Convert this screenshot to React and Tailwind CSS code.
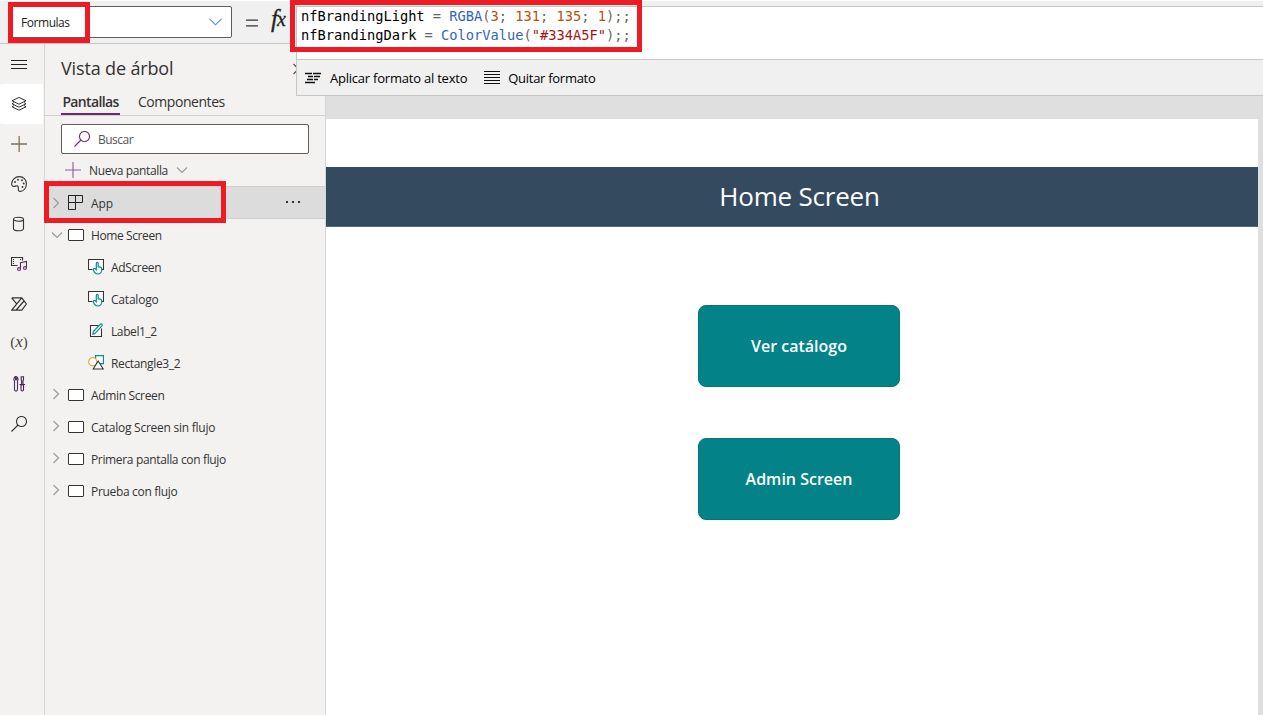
import React from "react";

const Svg = ({ w = 16, h = 16, children, className = "" }) => (
  <svg
    width={w}
    height={h}
    viewBox={`0 0 ${w} ${h}`}
    fill="none"
    stroke="#333"
    strokeWidth="1.1"
    className={`shrink-0 ${className}`}
  >
    {children}
  </svg>
);

const SearchIcon = ({ color = "#333" }) => (
  <Svg>
    <g stroke={color}>
      <circle cx="10.5" cy="5.5" r="5" />
      <path d="M7 9L.5 15.5" />
    </g>
  </Svg>
);

const MenuIcon = () => (
  <Svg>
    <path d="M0 4.5h16M0 8.5h16M0 12.5h16" stroke="#222" strokeWidth="1" />
  </Svg>
);

const LayersIcon = () => (
  <Svg>
    <path
      d="M8 1.4L15 4.8 8 8.2 1 4.8zM3 6.6L1 7.8l7 3.400 7-3.400-2-1.200M3 9.600l-2 1.200 7 3.400 7-3.400-2-1.200"
      strokeWidth="1"
    />
  </Svg>
);

const PlusRailIcon = () => (
  <Svg>
    <path d="M7.500 0v16" stroke="#e0a860" strokeWidth="1" />
    <path d="M8.500 0v16" stroke="#7b94ad" strokeWidth="1" />
    <path d="M0 8h16" stroke="#777" strokeWidth="1.600" />
  </Svg>
);

const PaletteIcon = () => (
  <Svg>
    <path d="M8.300.6C12.500.600 15.400 3.700 15.400 7.800c0 4.400-2.900 7.600-6.200 7.600-1.500 0-2-1-1.900-2.300.1-1.500.3-3-1.200-3.300-1.300-.2-2 .9-3.600.7C1 10.300.6 9.300.6 8 .6 4 4 .6 8.300.6z" />
    <g fill="#333" stroke="none">
      <circle cx="4" cy="6" r=".95" />
      <circle cx="7" cy="3.700" r=".95" />
      <circle cx="11" cy="4.200" r=".95" />
      <circle cx="12.700" cy="7.500" r=".95" />
      <circle cx="11.500" cy="11" r=".95" />
    </g>
  </Svg>
);

const DatabaseIcon = () => (
  <Svg>
    <ellipse cx="7.500" cy="3.200" rx="5" ry="2" />
    <path d="M2.500 3.200v9.600c0 1.200 2.200 2 5 2s5-.8 5-2V3.200" />
  </Svg>
);

const MediaIcon = () => (
  <Svg>
    <path d="M6.500 9.500H.5v-8h11v3" strokeWidth="1.200" />
    <path d="M2.500 3v6M9.500 3v2" strokeDasharray="1 1" strokeWidth="1" />
    <path d="M9.500 13V6.800l6-1.300v6.300" stroke="#4a3152" />
    <ellipse cx="8" cy="13" rx="1.500" ry="1.400" stroke="#6a3275" />
    <ellipse cx="14" cy="12" rx="1.500" ry="1.400" stroke="#6a3275" />
  </Svg>
);

const FlowIcon = () => (
  <Svg>
    <path
      d="M.7 1.800h10.100L15.400 8l-4.600 6.200H.7L10.500 2.200M.7 1.800L5.500 7.600M5.200 14L13 5M4.800 8.800"
      strokeLinejoin="round"
      strokeWidth="1.200"
    />
  </Svg>
);

const ToolsIcon = () => (
  <Svg>
    <g strokeWidth="1.100">
      <path
        d="M4.500.6v3h1.200V.8C7.300 1.700 7.300 4 6.500 5v8.600c0 2-3 2-3 0V5C2.500 4 2.500 1.700 4.500.6z"
        stroke="#4b3355"
      />
      <path d="M10.200.800h2.300v2.700l-.5 1.500v4h.5v4.500c0 2-2.500 2-2.500 0V9h.6V5l-.4-1.500zM8.500 8.500h5.500" stroke="#4b2355" />
    </g>
  </Svg>
);

const VariableIcon = () => (
  <span className="-mt-1 flex font-['Liberation_Serif',serif] text-[15px] leading-4 text-[#444]">
    (<i className="text-[17px]">x</i>)
  </span>
);

const Chevron = ({ down, className = "" }) => (
  <Svg w={12} h={12} className={className}>
    <path d={down ? "M1 3.500L6 8.500 11 3.500" : "M3.500 1L8.500 6 3.500 11"} stroke="#999" />
  </Svg>
);

const AppIcon = () => (
  <Svg>
    <path d="M.5.500h14v7H.5zM7.500.5v14H.5V.5" stroke="#222" strokeWidth="1" />
  </Svg>
);

const ScreenIcon = () => <span className="h-3 w-4 shrink-0 rounded-[1px] border border-[#333] bg-white" />;

const ButtonIcon = () => (
  <Svg>
    <path d="M4.500 10.500H.5V.500h15v10H14" fill="#fff" stroke="#333" />
    <path
      d="M8.300 9V4.400c0-1.300 1.900-1.300 1.900 0v3.300l2.500.6c.8.200 1.100.7 1 1.500v1.700c-.3 2.500-1.700 3.500-4 3.500-2.200 0-3.300-1.300-4.200-3.700-.5-1.300.6-2.400 1.800-1.500l1 1z"
      fill="#fff"
      stroke="#0a8d91"
      strokeWidth="1.200"
    />
  </Svg>
);

const LabelIcon = () => (
  <Svg>
    <path d="M13.500 5.500v8h-11v-11h8" fill="#fff" />
    <path d="M4.800 11.200l.7-2.900L12.200 1.300c1.200-1.200 2.800.3 1.700 1.500L7.500 10z" fill="#d9efef" stroke="#0a8d91" />
  </Svg>
);

const ShapeIcon = () => (
  <Svg>
    <path d="M7.500.700h8v8h-8z" stroke="#0a8d91" strokeWidth="1.300" fill="#fff" />
    <circle cx="4.700" cy="6.700" r="4.100" stroke="#f0a93c" strokeWidth="1.200" fill="#fff" />
    <path d="M10.200 6l5 8H5.200z" fill="#fff" />
  </Svg>
);

const RAIL = [
  MenuIcon,
  LayersIcon,
  PlusRailIcon,
  PaletteIcon,
  DatabaseIcon,
  MediaIcon,
  FlowIcon,
  VariableIcon,
  ToolsIcon,
  SearchIcon,
];

const CONTROLS = [
  ["AdScreen", ButtonIcon, "tracking-[-0.35px]"],
  ["Catalogo", ButtonIcon, "tracking-[-0.2px]"],
  ["Label1_2", LabelIcon, "tracking-[-0.4px]"],
  ["Rectangle3_2", ShapeIcon, "tracking-[-0.35px]"],
];

const SCREENS = [
  ["Admin Screen", "tracking-[-0.35px]"],
  ["Catalog Screen sin flujo", "tracking-[-0.25px]"],
  ["Primera pantalla con flujo", "tracking-[-0.35px]"],
  ["Prueba con flujo", "tracking-[-0.32px]"],
];

function Header() {
  return (
    <header className="flex h-11 shrink-0 items-start border-t border-b border-t-white border-b-[#c8c6c4] bg-[#f0f0f0]">
      <div className="mt-[5px] ml-[10px] flex h-8 w-[222px] items-center justify-between rounded-[2px] border border-[#605e5c] bg-white pr-[9px] pl-[10px]">
        <span className="pt-[2px] text-[12px] tracking-[-0.45px] text-[#222]">Formulas</span>
        <Svg w={13} h={8}>
          <path d="M.5.800l6 6 6-6" stroke="#5b8fc4" />
        </Svg>
      </div>
      <Svg w={12} h={8} className="mt-[18px] ml-[14px]">
        <path d="M0 1.200h12M0 6.800h12" strokeWidth="1.300" />
      </Svg>
      <span className="mt-[5px] ml-[13px] flex font-['Liberation_Serif',serif] text-[25px] leading-[26px] text-[#222] italic [-webkit-text-stroke:0.3px_#222]">
        f<span className="-ml-px text-[20px]">x</span>
      </span>
    </header>
  );
}

function Rail() {
  return (
    <nav className="flex w-[45px] shrink-0 flex-col border-r border-[#d8d6d4]">
      {RAIL.map((Icon, i) => (
        <div
          key={i}
          className={`flex h-10 w-[43px] items-center justify-center pr-[5px] ${i === 1 ? "rounded-[2px] bg-white" : ""}`}
        >
          <Icon />
        </div>
      ))}
    </nav>
  );
}

function Tree() {
  return (
    <aside className="flex w-[281px] shrink-0 flex-col border-r border-[#d8d6d4] text-[12px] text-[#333]">
      <h1 className="flex h-[49px] items-center justify-between pr-[23px] pl-4 text-[18px] font-medium tracking-[-0.15px]">
        Vista de árbol
        <Chevron className="brightness-50" />
      </h1>
      <div className="flex h-[23px] border-b border-[#d2d0ce] pl-4 text-[14px] leading-[18px]">
        <span className="h-[22px] w-[59px] border-b-2 border-[#742774] text-center font-semibold tracking-[-0.65px] whitespace-nowrap">
          Pantallas
        </span>
        <span className="ml-[18px] tracking-[-0.45px]">Componentes</span>
      </div>
      <div className="mt-2 ml-4 flex h-[30px] w-[248px] items-center gap-2 rounded-[2px] border border-[#605e5c] bg-white pl-3 text-[#555]">
        <SearchIcon color="#742774" />
        <span className="pt-[2px] tracking-[-0.5px]">Buscar</span>
      </div>
      <div className="flex h-8 items-center gap-2 pl-5">
        <Svg>
          <path d="M0 8h16M8 0v16" stroke="#94589a" />
        </Svg>
        <span className="pt-[2px] tracking-[-0.36px]">Nueva pantalla</span>
        <Chevron down />
      </div>
      <div className="flex h-[33px] items-center border-y border-[#cfcfcf] bg-[#dcdcdc] pr-6 pl-[5px]">
        <Chevron />
        <span className="mr-[7px] ml-[6px] flex">
          <AppIcon />
        </span>
        <span className="grow pt-[2px] tracking-[-0.1px]">App</span>
        <span className="-mt-px mr-px flex gap-1">
          <i className="size-[2px] bg-[#333]" />
          <i className="size-[2px] bg-[#333]" />
          <i className="size-[2px] bg-[#333]" />
        </span>
      </div>
      <div className="flex h-8 items-center pl-[6px]">
        <Chevron down />
        <span className="mr-[7px] ml-[5px] flex">
          <ScreenIcon />
        </span>
        <span className="pt-[2px] tracking-[-0.4px]">Home Screen</span>
      </div>
      {CONTROLS.map(([name, Icon, tracking]) => (
        <div key={name} className="flex h-8 items-center gap-[7px] pl-[43px]">
          <Icon />
          <span className={`pt-[2px] ${tracking}`}>{name}</span>
        </div>
      ))}
      {SCREENS.map(([name, tracking]) => (
        <div key={name} className="flex h-8 items-center pl-[5px]">
          <Chevron className="mb-[2px]" />
          <span className="mr-[7px] ml-[6px] flex">
            <ScreenIcon />
          </span>
          <span className={`pt-[2px] ${tracking}`}>{name}</span>
        </div>
      ))}
    </aside>
  );
}

function Canvas() {
  return (
    <main className="flex grow flex-col bg-[#dfdfdf] pt-[75px] pr-[5px]">
      <div className="flex grow flex-col bg-white pt-12 font-['Open_Sans',sans-serif] text-white">
        <div className="flex h-[60px] items-center justify-center border-b border-[#566b82] bg-[#334a5f] pb-px pl-[15px] text-[26px] tracking-[-0.2px]">
          Home Screen
        </div>
        <div className="mt-[78px] flex flex-col items-center gap-[51px] pl-[14px] text-[16px] font-semibold">
          <div className="flex h-[82px] w-[202px] items-center justify-center rounded-lg border border-[#02777b] bg-[#038387]">
            Ver catálogo
          </div>
          <div className="flex h-[82px] w-[202px] items-center justify-center rounded-lg border border-[#02777b] bg-[#038387]">
            Admin Screen
          </div>
        </div>
      </div>
    </main>
  );
}

const Fn = ({ children }) => <span className="text-[#3165bb]">{children}</span>;
const Num = ({ children }) => <span className="text-[#b8500e]">{children}</span>;

function FormulaEditor() {
  return (
    <section className="absolute top-[6px] right-0 left-[296px] flex h-[90px] flex-col border border-r-0 border-[#c8c6c4] bg-white">
      <pre className="h-[52px] pl-1 font-['DejaVu_Sans_Mono',monospace] text-[13.7px] leading-[19px] text-[#666]">
        <span className="text-black">nfBrandingLight</span> = <Fn>RGBA</Fn>(<Num>3</Num>; <Num>131</Num>; <Num>135</Num>;{" "}
        <Num>1</Num>);;{"\n"}
        <span className="text-black">nfBrandingDark</span> = <Fn>ColorValue</Fn>(
        <span className="text-[#a31515]">"#334A5F"</span>);;
      </pre>
      <div className="flex grow items-center border-t border-[#c8c6c4] bg-[#f0f0f0] pl-2 text-[13px] text-black">
        <Svg>
          <path
            d="M0 3.500h7M8 3.500h8M3 6.500h5M9 6.500h6M2 9.500h6M9 9.500h4M0 12.500h10"
            stroke="#111"
            strokeWidth="1.300"
          />
        </Svg>
        <span className="ml-[9px] pt-[2px] tracking-[-0.22px]">Aplicar formato al texto</span>
        <Svg className="ml-[17px]">
          <path d="M0 1.500h16M0 4.500h16M0 7.500h16M0 10.500h16M0 13.500h16" stroke="#111" strokeWidth="1" />
        </Svg>
        <span className="ml-2 pt-[2px] tracking-[-0.28px]">Quitar formato</span>
      </div>
    </section>
  );
}

export default function App() {
  return (
    <div className="relative flex h-[715px] w-[1263px] flex-col overflow-hidden bg-[#f3f2f1] font-['Open_Sans',sans-serif]">
      <Header />
      <div className="flex grow">
        <Rail />
        <Tree />
        <Canvas />
      </div>
      <FormulaEditor />
      <div className="absolute top-[2px] left-2 h-[41px] w-[82px] border-[5px] border-[#ed1c24]" />
      <div className="absolute top-0 left-[290px] h-[52px] w-[352px] border-[5px] border-[#ed1c24]" />
      <div className="absolute top-[181px] left-11 h-[42px] w-[182px] border-[5px] border-[#ed1c24]" />
    </div>
  );
}
